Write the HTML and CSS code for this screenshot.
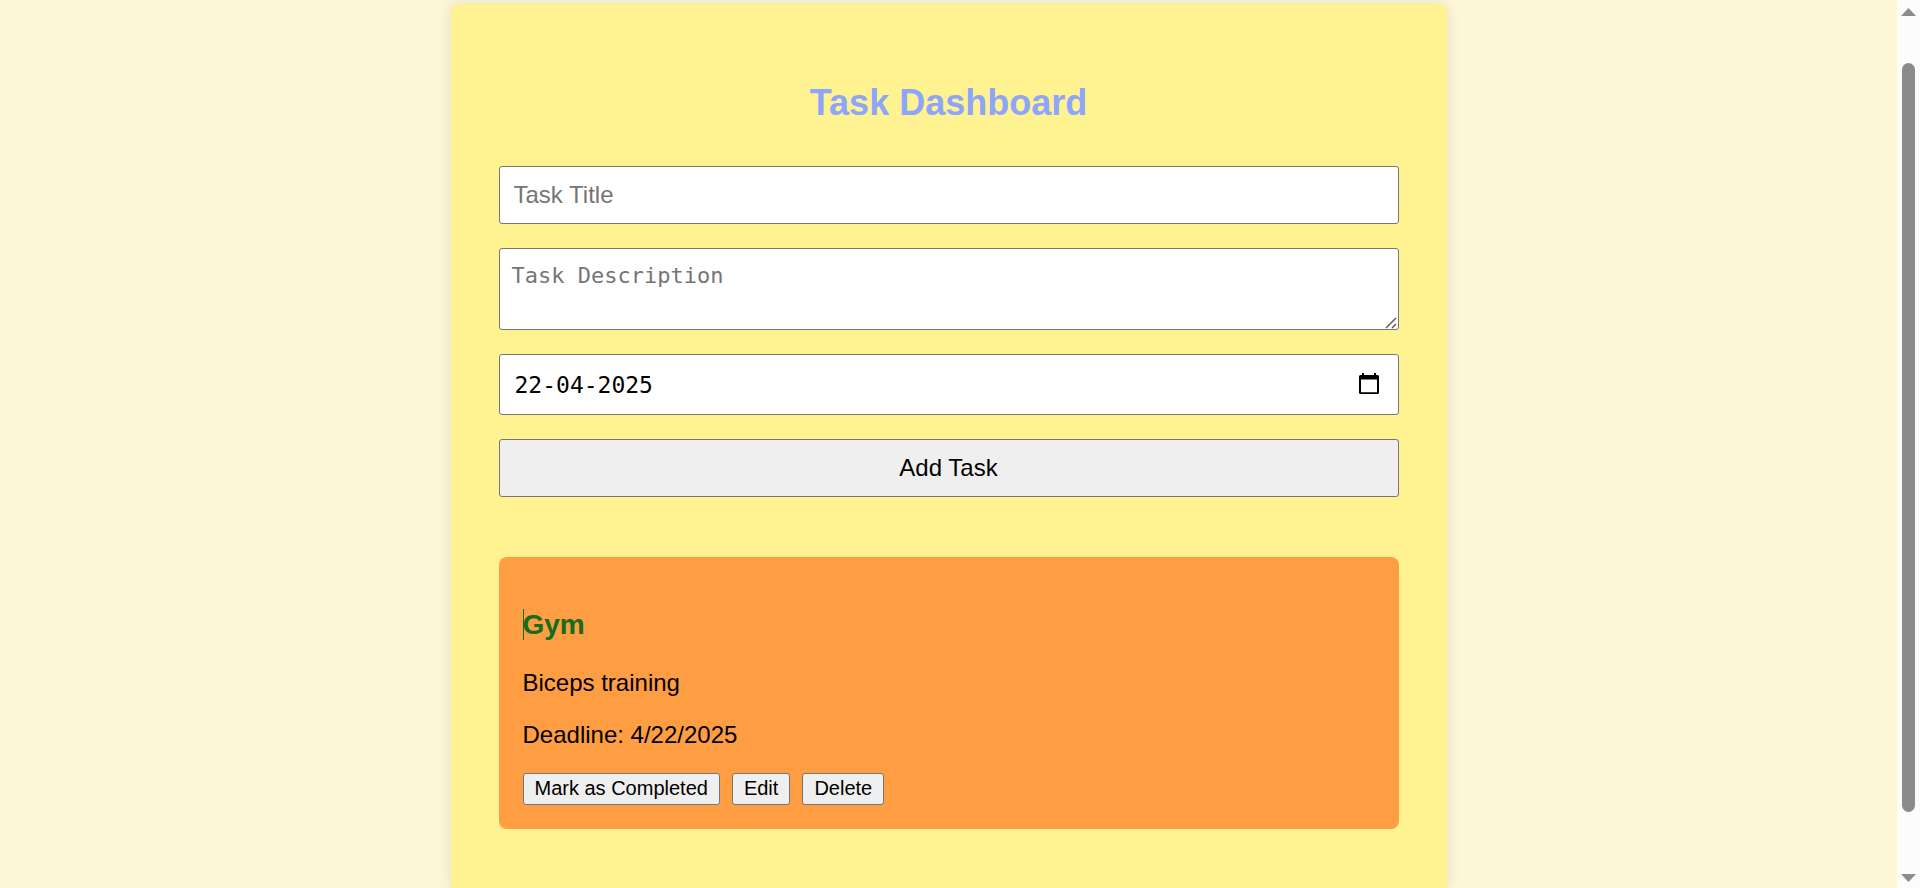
FILE: index.html
```html
<!DOCTYPE html>
<html lang="en">
<head>
<meta charset="utf-8">
<title>Task Dashboard</title>
<link rel="stylesheet" href="styles.css">
</head>
<body>
<div class="page">
  <main class="panel">
    <h2 class="panel-title">Task Dashboard</h2>
    <form class="task-form">
      <input class="field" type="text" placeholder="Task Title" aria-label="Task title">
      <div class="area-wrap">
        <textarea class="field field-area" rows="2" placeholder="Task Description" aria-label="Task description"></textarea>
        <svg class="grip" width="12" height="12" viewBox="0 0 12 12" aria-hidden="true">
          <path d="M1 11L11 1M7 11L11 7" stroke="#5c5c5c" stroke-width="1.500" fill="none"/>
        </svg>
      </div>
      <div class="field date-field">
        <input class="date-input" type="text" value="22-04-2025" aria-label="Deadline">
        <button class="date-button" type="button" aria-label="Open calendar">
          <svg width="20" height="22" viewBox="0 0 20 22" aria-hidden="true">
            <path d="M3 0h2v2h10V0h2v2h1.500q1.500 0 1.500 1.500v16q0 1.500-1.500 1.500h-17Q0 21 0 19.500v-16Q0 2 1.500 2H3zM2 6.500v12.700h16V6.500z" fill="#000" fill-rule="evenodd"/>
          </svg>
        </button>
      </div>
      <button class="field submit" type="button">Add Task</button>
    </form>
    <article class="card">
      <h3 class="card-title"><span class="caret"></span>Gym</h3>
      <p class="card-text">Biceps training</p>
      <p class="card-text">Deadline: 4/22/2025</p>
      <div class="actions">
        <button class="action" type="button">Mark as Completed</button>
        <button class="action" type="button">Edit</button>
        <button class="action" type="button">Delete</button>
      </div>
    </article>
  </main>
</div>
<div class="scrollbar" aria-hidden="true">
  <svg class="arrow" width="15" height="8" viewBox="0 0 15 8"><path d="M7.500 0L15 8H0z" fill="#8b8b8b"/></svg>
  <div class="track"><div class="thumb"></div></div>
  <svg class="arrow" width="15" height="8" viewBox="0 0 15 8"><path d="M0 0h15L7.500 8z" fill="#8b8b8b"/></svg>
</div>
</body>
</html>
```
FILE: styles.css
```css
* {
  box-sizing: border-box;
}

body {
  margin: 0;
  height: 100vh;
  display: flex;
  overflow: hidden;
  background: #fdf7d8;
  color: #000;
  font: 24px/28px "Liberation Sans", Arial, sans-serif;
}

.page {
  flex: 1;
  min-width: 0;
  padding-top: 4px;
  display: flex;
  justify-content: center;
  overflow: hidden;
}

.panel {
  width: 100%;
  max-width: 996px;
  padding: 48px;
  background: #fff291;
  border-radius: 8px 8px 0 0;
  box-shadow: 0 0 15px rgba(0, 0, 0, 0.1);
}

.panel-title {
  margin: 30px 0 42px;
  font-size: 36px;
  line-height: 42px;
  text-align: center;
  color: #8da5fb;
}

.task-form {
  display: flex;
  flex-direction: column;
  gap: 24px;
  margin-bottom: 60px;
}

.field {
  width: 100%;
  margin: 0;
  padding: 14px;
  border: 1px solid #767676;
  border-radius: 3px;
  background: #fff;
  color: #000;
  font: inherit;
}

.field::placeholder {
  color: #757575;
}

.area-wrap {
  position: relative;
}

.field-area {
  display: block;
  height: 82px;
  padding: 13px 12px 11px;
  font: 22px/28px "DejaVu Sans Mono", monospace;
  resize: none;
}

.grip {
  position: absolute;
  right: 2px;
  bottom: 1px;
}

.date-field {
  display: flex;
  align-items: center;
  padding: 15px 19px 16px 15px;
}

.date-input {
  flex: 1;
  min-width: 0;
  height: 28px;
  padding: 2px 0 0;
  border: 0;
  background: none;
  color: #000;
  font: 23px/26px "DejaVu Sans Mono", monospace;
}

.date-button {
  display: flex;
  padding: 0;
  border: 0;
  background: none;
}

.submit,
.action {
  background: #efefef;
  text-align: center;
}

.card {
  padding: 24px;
  border-radius: 8px;
  background: #ff9d42;
}

.card-title {
  position: relative;
  margin: 28px 0;
  font-size: 28px;
  line-height: 32px;
  color: #146c20;
}

.caret {
  position: absolute;
  left: 0;
  top: 0;
  width: 1px;
  height: 31px;
  background: #146c20;
}

.card-text {
  margin: 0 0 24px;
}

.actions {
  display: flex;
  gap: 12px;
}

.action {
  height: 32px;
  padding: 0 11px 2px;
  border: 1px solid #767676;
  border-radius: 3px;
  color: #000;
  font: 20px/28px "Liberation Sans", Arial, sans-serif;
}

.scrollbar {
  width: 23px;
  padding: 8px 0 6px;
  display: flex;
  flex-direction: column;
  align-items: center;
  background: #fcfcfc;
}

.arrow {
  display: block;
}

.track {
  flex: 1;
  padding: 47px 0 62px;
  display: flex;
}

.thumb {
  width: 13px;
  border-radius: 7px;
  background: #8b8b8b;
}
```
